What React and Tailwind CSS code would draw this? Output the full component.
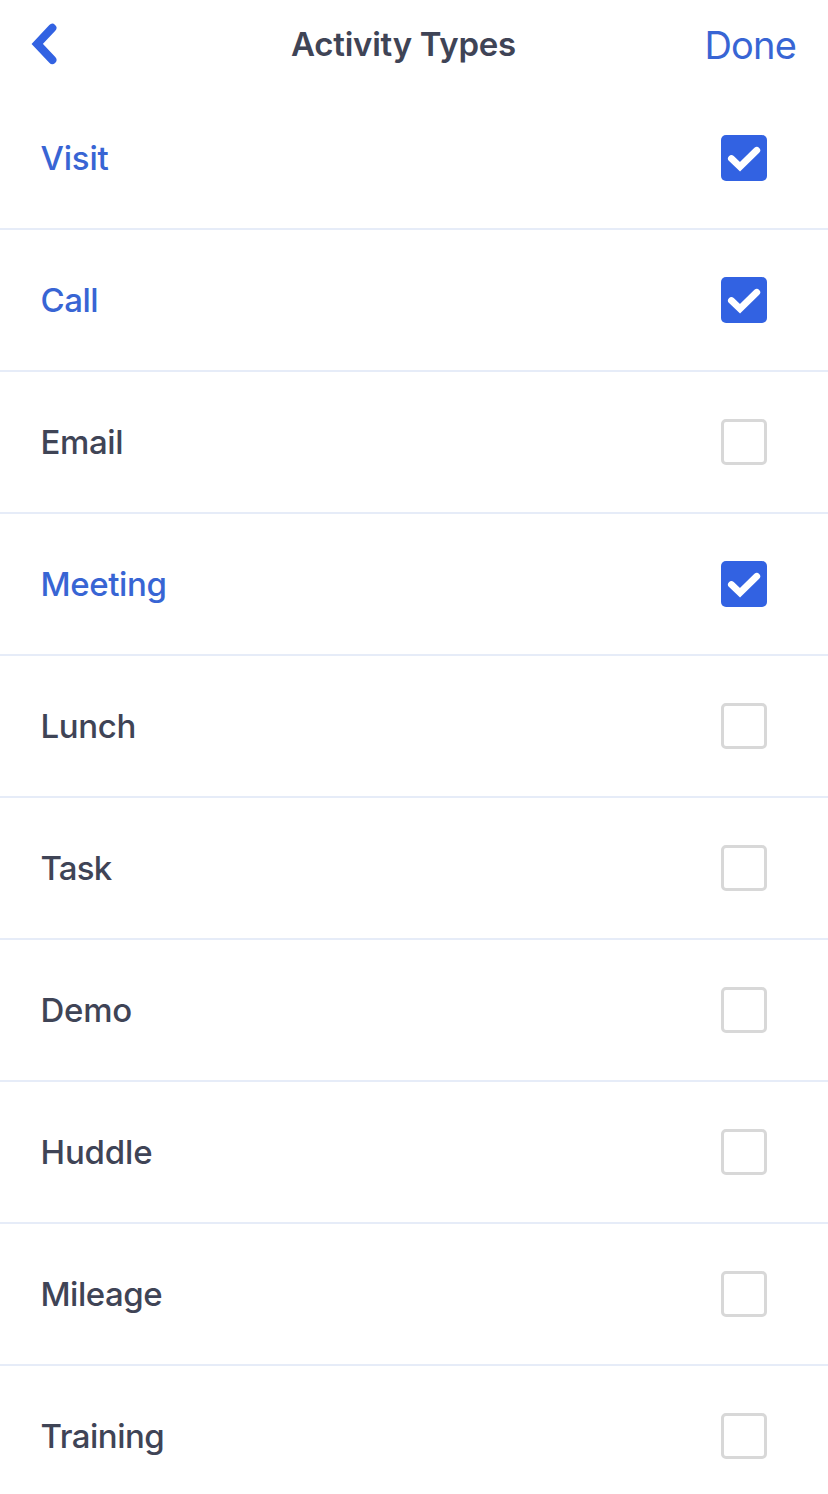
import { useState } from 'react';

const ACTIVITY_TYPES = [
  { name: 'Visit', labelClass: 'tracking-[-0.2px]' },
  { name: 'Call', labelClass: 'tracking-[-0.5px]' },
  { name: 'Email', labelClass: 'tracking-[-0.4px]' },
  { name: 'Meeting', labelClass: 'tracking-[-0.4px]' },
  { name: 'Lunch', labelClass: 'tracking-[-0.35px]' },
  { name: 'Task', labelClass: 'tracking-[-0.8px]' },
  { name: 'Demo', labelClass: 'tracking-[-0.25px]' },
  { name: 'Huddle', labelClass: 'tracking-[-0.15px]' },
  { name: 'Mileage', labelClass: 'tracking-[-0.5px]' },
  { name: 'Training', labelClass: 'tracking-[-0.5px]' }
];

function Checkbox({ checked }) {
  if (!checked) {
    return <span className="size-[46px] shrink-0 rounded-[5px] border-[3px] border-[#d8d8d8]" />;
  }
  return (
    <span className="size-[46px] shrink-0 rounded-[5px] bg-[#3262e2]">
      <svg viewBox="0 0 46 46" className="size-full" fill="none">
        <path d="M10.4 23.6 L19 31.7 L35.8 15.3" stroke="white" strokeWidth="6.8" strokeLinecap="round" />
      </svg>
    </span>
  );
}

export default function App() {
  const [selected, setSelected] = useState(['Visit', 'Call', 'Meeting']);

  const toggle = (name) => {
    setSelected((prev) => (prev.includes(name) ? prev.filter((n) => n !== name) : [...prev, name]));
  };

  return (
    <div className="h-[1494px] w-[828px] overflow-hidden bg-white font-['Inter',sans-serif] text-[#3f4456]">
      <header className="grid h-[88px] grid-cols-[260px_auto_1fr] items-center pr-8 pl-[31px]">
        <button className="justify-self-start" aria-label="Back">
          <svg viewBox="0 0 28 42" className="h-[42px] w-7" fill="none">
            <path d="M21.3 4.9 L6.2 20.9 L21.3 36.9" stroke="#3262e2" strokeWidth="8.2" strokeLinecap="round" />
          </svg>
        </button>
        <h1 className="pt-0.5 text-[33px] font-semibold tracking-[-0.25px]">Activity Types</h1>
        <button className="justify-self-end pt-0.5 text-[38px] tracking-[-0.8px] text-[#3865d4]">Done</button>
      </header>
      <ul>
        {ACTIVITY_TYPES.map(({ name, labelClass }) => {
          const checked = selected.includes(name);
          return (
            <li key={name} className="h-[142px] border-b-2 border-[#e6ecf8]">
              <button
                className="flex h-full w-full items-center justify-between pr-[61px] pl-[40.5px] text-left"
                onClick={() => toggle(name)}
              >
                <span className={`pt-0.5 text-[33px] font-medium ${labelClass} ${checked ? 'text-[#3865d4]' : ''}`}>
                  {name}
                </span>
                <Checkbox checked={checked} />
              </button>
            </li>
          );
        })}
      </ul>
    </div>
  );
}
